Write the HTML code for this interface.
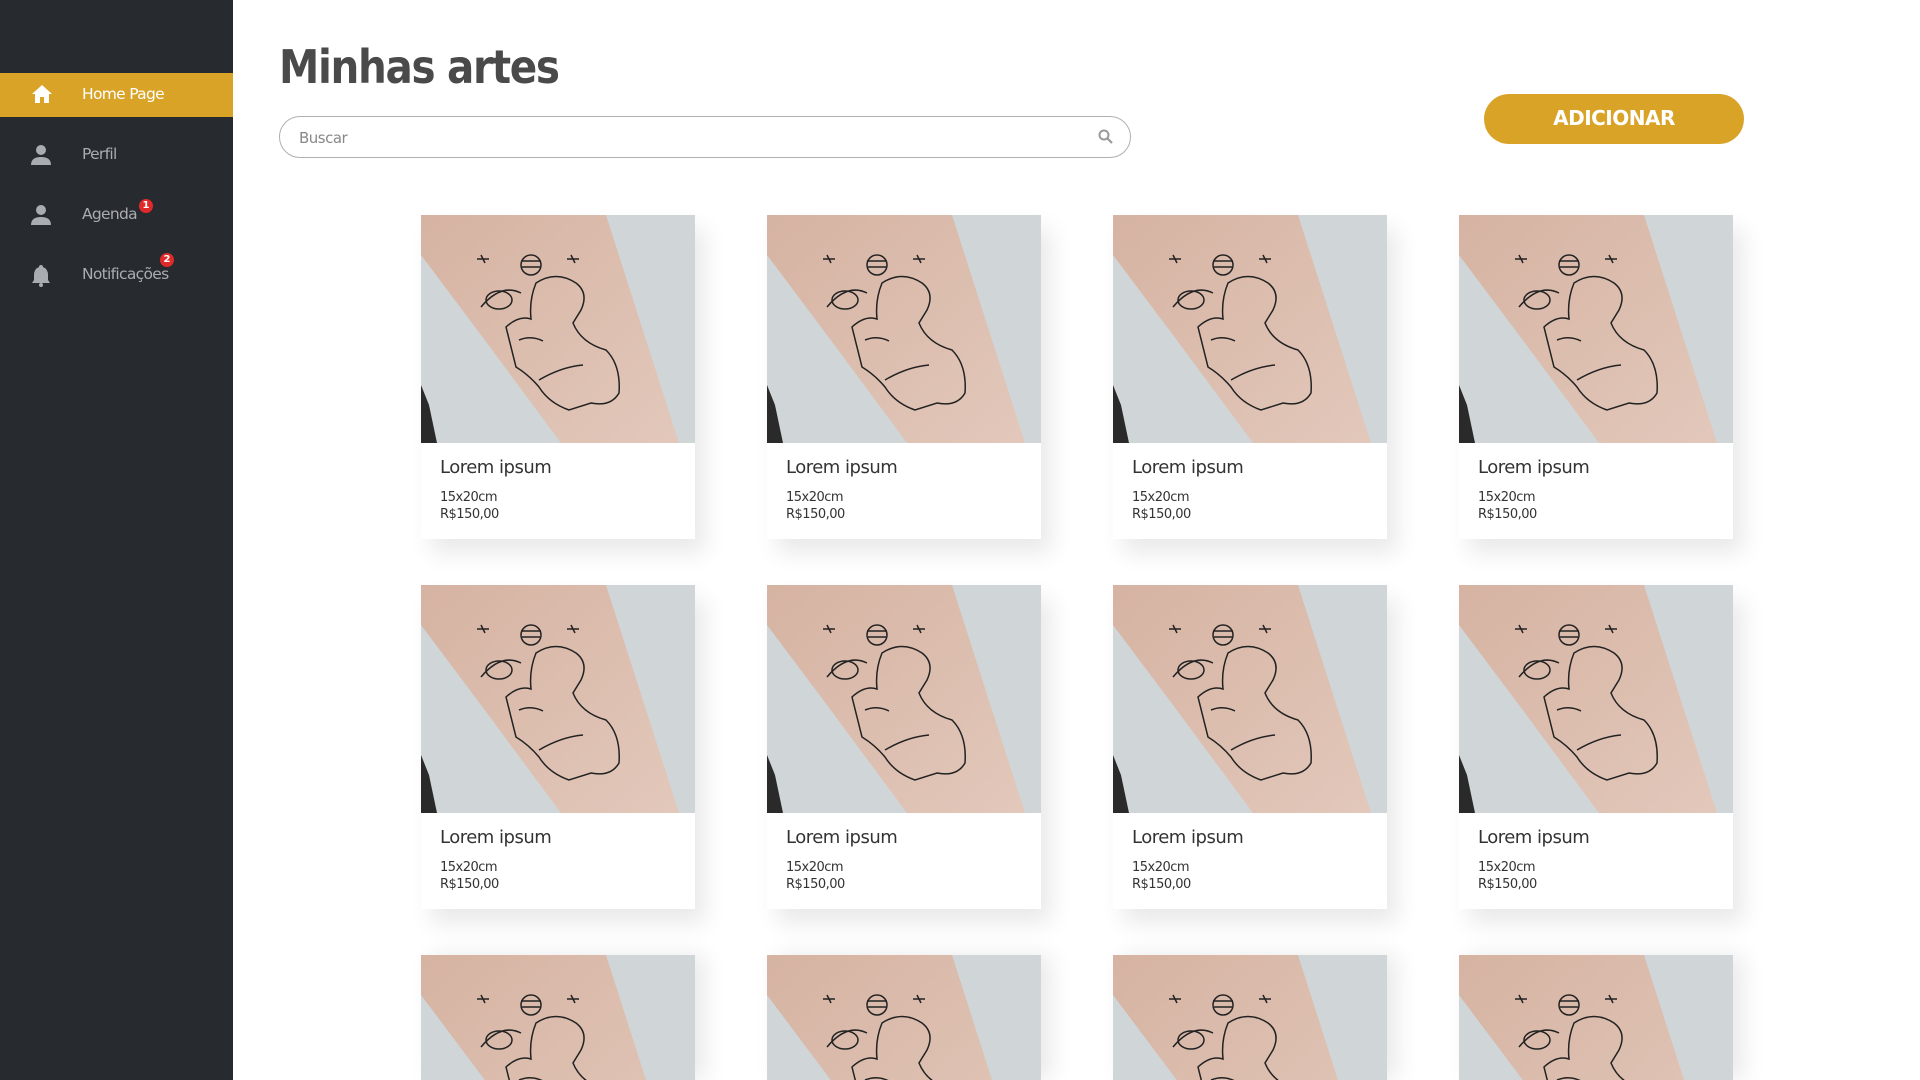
<!DOCTYPE html>
<html><head><meta charset="utf-8"><style>
*{margin:0;padding:0;box-sizing:border-box}
html,body{width:1920px;height:1080px;overflow:hidden}
body{background:#fff;font-family:"DejaVu Sans","Liberation Sans",sans-serif}
#wrap{position:relative;width:1920px;height:1080px;overflow:hidden}
.side{position:absolute;left:0;top:0;width:233px;height:1080px;background:#272a2f}
.item{position:absolute;left:0;width:233px;height:44px;color:#a9acb0;font-size:15.5px;letter-spacing:-0.7px}
.item.act{background:#d9a327;color:#fff}
.item span.t{position:absolute;left:82px;top:12px}
.item svg{position:absolute;left:31px;top:11px}
.badge{position:absolute;width:14px;height:14px;border-radius:7px;background:#e02a2a;color:#fff;font-size:10px;font-weight:bold;text-align:center;line-height:14px;letter-spacing:0}
h1{position:absolute;left:279px;top:40px;font-size:46px;font-weight:bold;color:#4a4a4a;letter-spacing:-1.5px;transform:scaleX(0.88);transform-origin:left}
.search{position:absolute;left:279px;top:116px;width:852px;height:42px;border:1.5px solid #b0b0b0;border-radius:21px}
.search span{position:absolute;left:19px;top:12px;font-size:15px;color:#888;letter-spacing:-0.5px}
.search svg{position:absolute;right:16px;top:12px}
.btn{position:absolute;left:1484px;top:94px;width:260px;height:50px;border-radius:25px;background:#d9a327;color:#fff;font-weight:bold;font-size:20px;text-align:center;line-height:48px;letter-spacing:-0.5px}
.card{position:absolute;width:274px;height:324px;background:#fff;box-shadow:10px 14px 22px rgba(0,0,0,0.09);overflow:hidden}
.card.last{height:125px;box-shadow:10px 0 22px rgba(0,0,0,0.09)}
.card svg{display:block}
.card .n{position:absolute;left:19px;top:242px;font-size:18px;color:#333;letter-spacing:-0.5px}
.card .d{position:absolute;left:19px;top:274px;font-size:13px;color:#333;line-height:17px;letter-spacing:-0.5px}
</style></head><body><div id="wrap">
<svg width="0" height="0" style="position:absolute">
<symbol id="img" viewBox="0 0 274 228">
<defs><linearGradient id="sk" x1="0" y1="0" x2="1" y2="1"><stop offset="0" stop-color="#d6b3a2"/><stop offset="1" stop-color="#e2c8bb"/></linearGradient></defs>
<rect width="274" height="228" fill="#d0d5d8"/>
<polygon points="0,0 185,0 258,228 140,228 60,120 0,40" fill="url(#sk)"/>
<polygon points="0,170 0,228 16,228 8,190" fill="#2a2a2a"/>
<g fill="none" stroke="#222" stroke-width="1.5">
<circle cx="110" cy="50" r="10"/>
<path d="M100 46 H120 M101 52 H119"/>
<ellipse cx="78" cy="85" rx="13" ry="9"/>
<path d="M60 92 Q80 68 100 78"/>
<path d="M115 68 Q135 55 155 68 Q168 78 160 95 L152 108 Q160 128 185 135 Q200 150 198 178 Q190 192 170 188 L148 195 Q128 188 118 172 Q108 160 95 152 L85 112 Q98 100 110 104 Q108 85 115 68Z"/>
<path d="M98 125 Q110 120 122 126"/>
<path d="M118 165 Q140 152 162 150"/>
<path d="M60 40 L64 48 M56 44 L68 44 M150 40 L154 48 M146 44 L158 44"/>
</g>
</symbol>
</svg>
<div class="side">
<div class="item act" style="top:73px"><svg width="22" height="20" viewBox="0 0 22 20"><path d="M11 1 L21 10 H18 V19 H13 V13 H9 V19 H4 V10 H1Z" fill="#fff"/></svg><span class="t">Home Page</span></div>
<div class="item" style="top:133px"><svg width="20" height="22" viewBox="0 0 20 22"><circle cx="10" cy="6" r="5" fill="#a9acb0"/><path d="M0 21 Q0 13 10 13 Q20 13 20 21Z" fill="#a9acb0"/></svg><span class="t">Perfil</span></div>
<div class="item" style="top:193px"><svg width="20" height="22" viewBox="0 0 20 22"><circle cx="10" cy="6" r="5" fill="#a9acb0"/><path d="M0 21 Q0 13 10 13 Q20 13 20 21Z" fill="#a9acb0"/></svg><span class="t">Agenda</span><div class="badge" style="left:139px;top:6px">1</div></div>
<div class="item" style="top:253px"><svg width="20" height="24" viewBox="0 0 20 24"><path d="M10 1 Q12 1 12 3 Q17 5 17 11 V16 L19 19 H1 L3 16 V11 Q3 5 8 3 Q8 1 10 1Z" fill="#a9acb0"/><circle cx="10" cy="21" r="2" fill="#a9acb0"/></svg><span class="t">Notificações</span><div class="badge" style="left:160px;top:0px">2</div></div>
</div>
<h1>Minhas artes</h1>
<div class="search"><span>Buscar</span><svg width="16" height="16" viewBox="0 0 16 16"><circle cx="6" cy="6" r="4.5" fill="none" stroke="#999" stroke-width="2"/><path d="M9.5 9.5 L14 14" stroke="#999" stroke-width="2.2"/></svg></div>
<div class="btn">ADICIONAR</div>

<div class="card" style="left:421px;top:215px"><svg width="274" height="228"><use href="#img"/></svg><div class="n">Lorem ipsum</div><div class="d">15x20cm<br>R$150,00</div></div>
<div class="card" style="left:767px;top:215px"><svg width="274" height="228"><use href="#img"/></svg><div class="n">Lorem ipsum</div><div class="d">15x20cm<br>R$150,00</div></div>
<div class="card" style="left:1113px;top:215px"><svg width="274" height="228"><use href="#img"/></svg><div class="n">Lorem ipsum</div><div class="d">15x20cm<br>R$150,00</div></div>
<div class="card" style="left:1459px;top:215px"><svg width="274" height="228"><use href="#img"/></svg><div class="n">Lorem ipsum</div><div class="d">15x20cm<br>R$150,00</div></div>

<div class="card" style="left:421px;top:585px"><svg width="274" height="228"><use href="#img"/></svg><div class="n">Lorem ipsum</div><div class="d">15x20cm<br>R$150,00</div></div>
<div class="card" style="left:767px;top:585px"><svg width="274" height="228"><use href="#img"/></svg><div class="n">Lorem ipsum</div><div class="d">15x20cm<br>R$150,00</div></div>
<div class="card" style="left:1113px;top:585px"><svg width="274" height="228"><use href="#img"/></svg><div class="n">Lorem ipsum</div><div class="d">15x20cm<br>R$150,00</div></div>
<div class="card" style="left:1459px;top:585px"><svg width="274" height="228"><use href="#img"/></svg><div class="n">Lorem ipsum</div><div class="d">15x20cm<br>R$150,00</div></div>

<div class="card last" style="left:421px;top:955px"><svg width="274" height="125" viewBox="0 0 274 125"><use href="#img" width="274" height="228"/></svg></div>
<div class="card last" style="left:767px;top:955px"><svg width="274" height="125" viewBox="0 0 274 125"><use href="#img" width="274" height="228"/></svg></div>
<div class="card last" style="left:1113px;top:955px"><svg width="274" height="125" viewBox="0 0 274 125"><use href="#img" width="274" height="228"/></svg></div>
<div class="card last" style="left:1459px;top:955px"><svg width="274" height="125" viewBox="0 0 274 125"><use href="#img" width="274" height="228"/></svg></div>
</div></body></html>
